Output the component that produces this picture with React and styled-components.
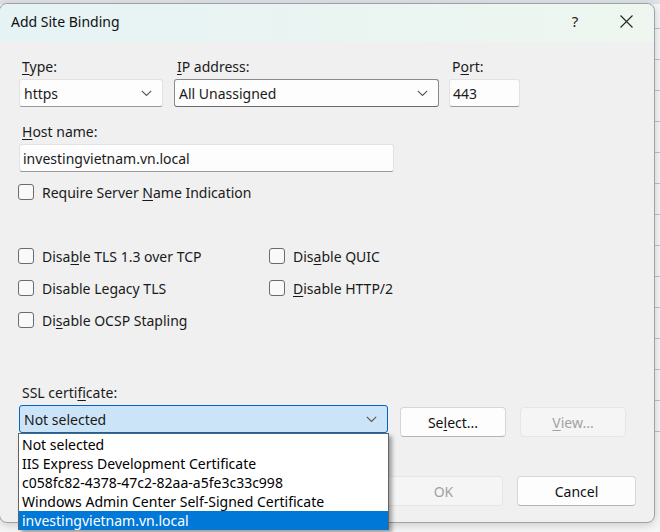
import React from "react";
import styled, { createGlobalStyle } from "styled-components";

const Global = createGlobalStyle`
  html, body { margin: 0; padding: 0; }
  body {
    width: 660px; height: 532px; overflow: hidden;
    background: #f4f4f4;
    font-family: "Noto Sans", "Open Sans", sans-serif;
    color: #1a1a1a;
  }
`;

const Page = styled.div`
  position: relative;
  width: 660px;
  height: 532px;
  overflow: hidden;
  background: linear-gradient(to bottom, #dfe3e8 0, #dfe3e8 4px, #f6f6f6 4px);
`;

const BackLines = styled.div`
  position: absolute;
  right: 0;
  top: 0;
  width: 6px;
  height: 532px;
  display: flex;
  flex-direction: column;
  gap: 30px;
  padding-top: 28px;
  & > i { display: block; height: 1px; background: #b9c3cc; }
`;

const Dialog = styled.div`
  position: relative;
  margin: 3px 0 0 -1px;
  width: 656px;
  height: 520px;
  box-sizing: border-box;
  border: 1px solid #9ea3a8;
  border-radius: 8px;
  background: #f0f0f0;
  box-shadow: 0 2px 10px rgba(0,0,0,0.18);
  display: flex;
  flex-direction: column;
`;

const TitleBar = styled.div`
  height: 38px;
  box-sizing: border-box;
  padding: 0 0 4px 11px;
  flex: none;
  display: flex;
  align-items: center;
  border-radius: 8px 8px 0 0;
  background: linear-gradient(to right, #e6f3f5, #eef6ef);
  font-size: 14px;
  color: #111;
`;

const Title = styled.div`
  flex: 1;
`;

const TitleBtn = styled.div`
  width: ${p => p.$w}px;
  height: 34px;
  display: flex;
  align-items: center;
  justify-content: center;
  font-size: 15px;
  color: #222;
`;

const Body = styled.div`
  flex: 1;
  padding: 15px 0 0 19px;
  display: flex;
  flex-direction: column;
  font-size: 14px;
`;

const TopGrid = styled.div`
  display: grid;
  grid-template-columns: 144px 265px 70px;
  column-gap: 11px;
  align-items: end;
  & > div:last-child { margin-left: -1px; }
`;

const Field = styled.div`
  display: flex;
  flex-direction: column;
`;

const Label = styled.div`
  height: 20px;
  line-height: 20px;
  padding-left: 3px;
  margin-bottom: 2px;
  white-space: nowrap;
`;

const U = styled.span`
  text-decoration: underline;
  text-underline-offset: 2px;
`;

const Combo = styled.div`
  box-sizing: border-box;
  height: 28px;
  display: flex;
  align-items: center;
  justify-content: space-between;
  padding: 0 10px 0 4px;
  background: ${p => (p.$active ? "#cce4f7" : "#fdfdfd")};
  border: 1px solid ${p => (p.$active ? "#0067c0" : p.$dark ? "#8a8a8a" : "#e2e2e2")};
  border-bottom-color: ${p => (p.$active ? "#0067c0" : p.$dark ? "#6a6a6a" : "#9a9a9a")};
  border-radius: 3px;
  white-space: nowrap;
`;

const TextBox = styled.div`
  box-sizing: border-box;
  height: 28px;
  width: ${p => p.$w || "auto"};
  display: flex;
  align-items: center;
  padding-left: 3px;
  background: #fdfdfd;
  border: 1px solid #e2e2e2;
  border-bottom-color: #9a9a9a;
  border-radius: 3px;
  white-space: nowrap;
`;

const Chevron = () => (
  <svg width="11" height="7" viewBox="0 0 11 7">
    <path d="M0.8 0.8 L5.5 5.5 L10.2 0.8" fill="none" stroke="#555" strokeWidth="1.1" />
  </svg>
);

const HostSection = styled.div`
  margin-top: 15px;
`;

const CheckRow = styled.label`
  display: flex;
  align-items: center;
  gap: 8px;
  height: 20px;
  white-space: nowrap;
`;

const Box = styled.span`
  box-sizing: border-box;
  width: 16px;
  height: 16px;
  border: 1px solid #6b6b6b;
  border-radius: 3px;
  background: #f9f9f9;
  flex: none;
`;

const SniRow = styled.div`
  margin-top: 10px;
  margin-left: -1px;
`;

const CheckGrid = styled.div`
  margin-top: 44px;
  margin-left: -1px;
  display: grid;
  grid-template-columns: 251px auto;
  row-gap: 12px;
`;

const SslSection = styled.div`
  margin-top: 53px;
  display: flex;
  flex-direction: column;
`;

const SslRow = styled.div`
  display: flex;
  align-items: flex-start;
  gap: 12px;
  & > :last-child { margin-left: 2px; }
`;

const ComboWrap = styled.div`
  position: relative;
  width: 369px;
  flex: none;
`;

const Button = styled.div`
  box-sizing: border-box;
  width: ${p => p.$w || 106}px;
  height: 30px;
  margin-top: 2px;
  display: flex;
  align-items: center;
  justify-content: center;
  border-radius: 4px;
  background: ${p => (p.$disabled ? "#f5f5f5" : "#fdfdfd")};
  border: 1px solid ${p => (p.$disabled ? "#e6e6e6" : "#d6d6d6")};
  border-bottom-color: ${p => (p.$disabled ? "#e6e6e6" : "#b4b4b4")};
  color: ${p => (p.$disabled ? "#a2a2a2" : "#111")};
  white-space: nowrap;
`;

const Footer = styled.div`
  margin-top: 37px;
  display: flex;
  justify-content: flex-end;
  gap: 14px;
  padding-right: 18px;
`;

const DropList = styled.div`
  position: absolute;
  left: -1px;
  top: 28px;
  width: 371px;
  box-sizing: border-box;
  border: 1px solid #646464;
  border-bottom: none;
  background: #fff;
  box-shadow: 3px 3px 4px rgba(0,0,0,0.35);
  padding-top: 1px;
  z-index: 5;
`;

const Item = styled.div`
  height: 19px;
  line-height: 19px;
  padding-left: 3px;
  font-size: 14px;
  background: ${p => (p.$sel ? "#0078d7" : "transparent")};
  color: ${p => (p.$sel ? "#fff" : "#000")};
  white-space: nowrap;
`;

const items = [
  "Not selected",
  "IIS Express Development Certificate",
  "c058fc82-4378-47c2-82aa-a5fe3c33c998",
  "Windows Admin Center Self-Signed Certificate",
  "investingvietnam.vn.local",
];

const Check = ({ children }) => (
  <CheckRow>
    <Box />
    <span>{children}</span>
  </CheckRow>
);

export default function App() {
  return (
    <Page>
      <Global />
      <BackLines>
        <i /><i /><i /><i /><i /><i /><i /><i /><i /><i /><i /><i /><i /><i />
      </BackLines>
      <Dialog>
        <TitleBar>
          <Title>Add Site Binding</Title>
          <TitleBtn $w={46}>?</TitleBtn>
          <TitleBtn $w={56}>
            <svg width="13" height="13" viewBox="0 0 13 13">
              <path d="M0.5 0.5 L12.5 12.5 M12.5 0.5 L0.5 12.5" stroke="#222" strokeWidth="1.1" />
            </svg>
          </TitleBtn>
        </TitleBar>
        <Body>
          <TopGrid>
            <Field>
              <Label><U>T</U>ype:</Label>
              <Combo>https<Chevron /></Combo>
            </Field>
            <Field>
              <Label><U>I</U>P address:</Label>
              <Combo $dark>All Unassigned<Chevron /></Combo>
            </Field>
            <Field>
              <Label>P<U>o</U>rt:</Label>
              <TextBox>443</TextBox>
            </Field>
          </TopGrid>
          <HostSection>
            <Label><U>H</U>ost name:</Label>
            <TextBox $w="375px">investingvietnam.vn.local</TextBox>
          </HostSection>
          <SniRow>
            <Check>Require Server <U>N</U>ame Indication</Check>
          </SniRow>
          <CheckGrid>
            <Check>Disa<U>b</U>le TLS 1.3 over TCP</Check>
            <Check>Dis<U>a</U>ble QUIC</Check>
            <Check>Disable Le<U>g</U>acy TLS</Check>
            <Check><U>D</U>isable HTTP/2</Check>
            <Check>Di<U>s</U>able OCSP Stapling</Check>
          </CheckGrid>
          <SslSection>
            <Label>SSL certi<U>f</U>icate:</Label>
            <SslRow>
              <ComboWrap>
                <Combo $active>Not selected<Chevron /></Combo>
                <DropList>
                  {items.map((t, i) => (
                    <Item key={t} $sel={i === items.length - 1}>{t}</Item>
                  ))}
                </DropList>
              </ComboWrap>
              <Button>Se<U>l</U>ect...</Button>
              <Button $disabled><U>V</U>iew...</Button>
            </SslRow>
          </SslSection>
          <Footer>
            <Button $w={119} $disabled>OK</Button>
            <Button $w={119}>Cancel</Button>
          </Footer>
        </Body>
      </Dialog>
    </Page>
  );
}
